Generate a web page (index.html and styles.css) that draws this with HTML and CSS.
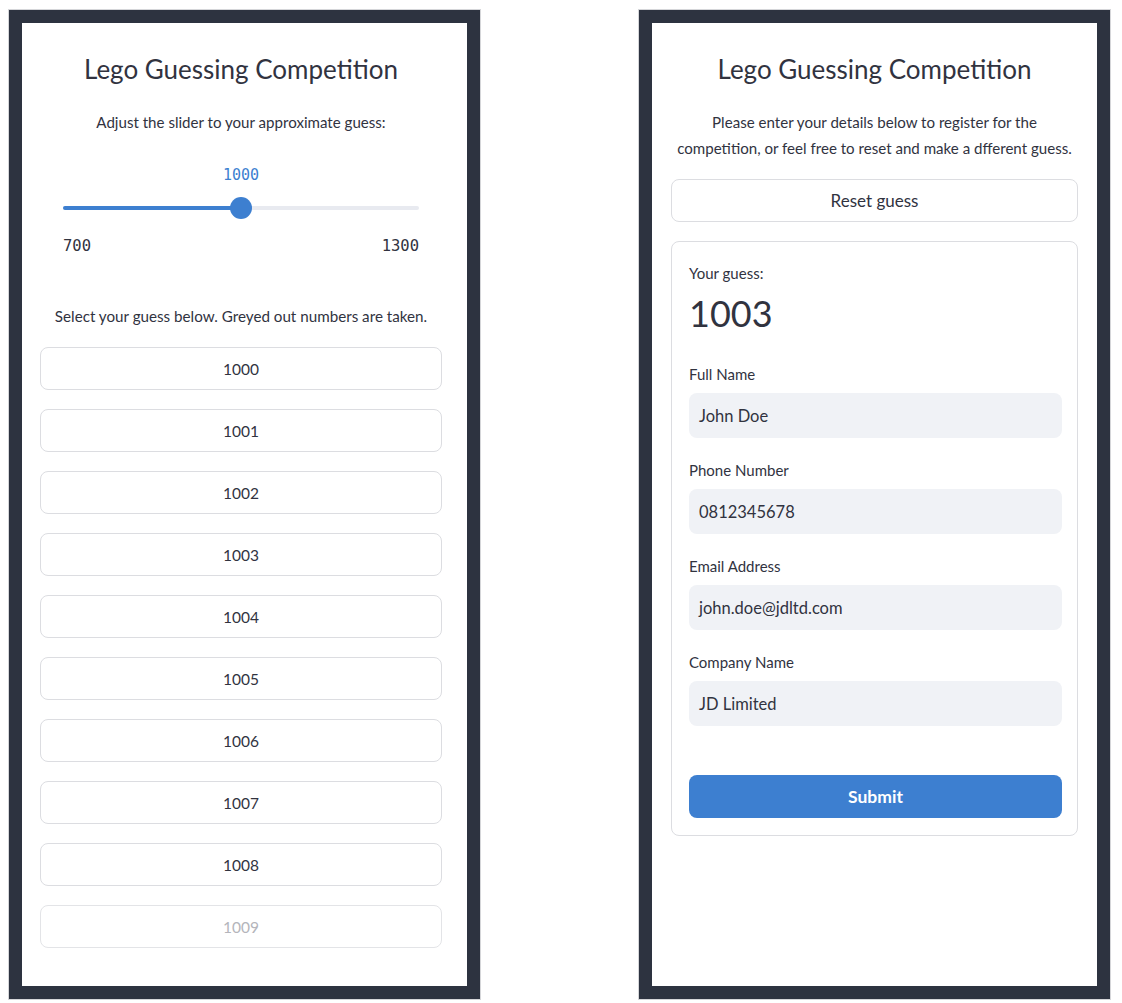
FILE: index.html
```html
<!DOCTYPE html>
<html lang="en">
<head>
<meta charset="utf-8">
<title>Lego Guessing Competition</title>
<link rel="stylesheet" href="styles.css">
</head>
<body>
<div class="stage">
  <div class="phone">
    <div class="screen screen-left">
      <h1 class="title">Lego Guessing Competition</h1>
      <p class="lead">Adjust the slider to your approximate guess:</p>
      <div class="slider">
        <div class="slider-value">1000</div>
        <div class="slider-track">
          <div class="slider-fill" style="width: 50%"></div>
          <div class="slider-thumb" style="left: 50%"></div>
        </div>
        <div class="slider-range"><span>700</span><span>1300</span></div>
      </div>
      <p class="lead lead-select">Select your guess below. Greyed out numbers are taken.</p>
      <div class="guess-list">
        <button class="btn">1000</button>
        <button class="btn">1001</button>
        <button class="btn">1002</button>
        <button class="btn">1003</button>
        <button class="btn">1004</button>
        <button class="btn">1005</button>
        <button class="btn">1006</button>
        <button class="btn">1007</button>
        <button class="btn">1008</button>
        <button class="btn btn-taken" disabled>1009</button>
      </div>
    </div>
  </div>
  <div class="phone">
    <div class="screen screen-right">
      <h1 class="title">Lego Guessing Competition</h1>
      <p class="lead lead-two">Please enter your details below to register for the<br>competition, or feel free to reset and make a dfferent guess.</p>
      <button class="btn btn-reset">Reset guess</button>
      <form class="card">
        <div class="metric-label">Your guess:</div>
        <div class="metric-value">1003</div>
        <div class="field field-first">
          <label class="field-label">Full Name</label>
          <div class="input">John Doe</div>
        </div>
        <div class="field">
          <label class="field-label">Phone Number</label>
          <div class="input">0812345678</div>
        </div>
        <div class="field">
          <label class="field-label">Email Address</label>
          <div class="input">john.doe@jdltd.com</div>
        </div>
        <div class="field">
          <label class="field-label">Company Name</label>
          <div class="input">JD Limited</div>
        </div>
        <button type="button" class="btn-primary">Submit</button>
      </form>
    </div>
  </div>
</div>
</body>
</html>
```

FILE: styles.css
```css
* { box-sizing: border-box; }
html, body { margin: 0; padding: 0; background: #ffffff; }
body {
  font-family: "Lato", "Noto Sans", sans-serif;
  color: #31333f;
}
.stage {
  display: flex;
  gap: 157px;
  padding: 9px 0 0 8px;
}
.phone {
  border: 1px solid #d5d6d9;
}
.screen {
  width: 471px;
  height: 989px;
  border: 13px solid #2d3340;
  background: #ffffff;
  display: flex;
  flex-direction: column;
  padding-top: 28px;
}
.screen-left { padding-left: 18px; padding-right: 25px; }
.screen-right { padding-left: 19px; padding-right: 19px; }

.title {
  margin: 0;
  font-size: 26px;
  line-height: 36px;
  font-weight: 400;
  text-align: center;
  color: #31333f;
}
.lead {
  margin: 23px 0 0;
  font-size: 15.1px;
  line-height: 24px;
  text-align: center;
  color: #31333f;
}
.lead-two {
  margin-top: 22px;
  line-height: 26px;
  font-size: 15.1px;
}
.lead-select { margin-top: 48px; font-size: 15.2px; }

.slider {
  margin: 31px 23px 0;
  font-family: "DejaVu Sans Mono", monospace;
}
.slider-value {
  text-align: center;
  font-size: 15px;
  line-height: 20px;
  color: #3d7fd0;
}
.slider-track {
  position: relative;
  margin-top: 12px;
  height: 22px;
}
.slider-track::before {
  content: "";
  position: absolute;
  left: 0; right: 0; top: 9px;
  height: 4px;
  border-radius: 2px;
  background: #e8eaf0;
}
.slider-fill {
  position: absolute;
  left: 0; top: 9px;
  height: 4px;
  border-radius: 2px;
  background: #3d7fd0;
}
.slider-thumb {
  position: absolute;
  top: 0;
  width: 22px; height: 22px;
  margin-left: -11px;
  border-radius: 50%;
  background: #3d7fd0;
}
.slider-range {
  margin-top: 17px;
  display: flex;
  justify-content: space-between;
  font-size: 15.5px;
  line-height: 20px;
  color: #31333f;
}

.guess-list {
  margin-top: 19px;
  display: flex;
  flex-direction: column;
  gap: 19px;
}
.btn {
  display: block;
  width: 100%;
  height: 43px;
  border: 1px solid #dcdde1;
  border-radius: 8px;
  background: #ffffff;
  font-family: "Lato", "Noto Sans", sans-serif;
  font-size: 15.5px;
  color: #31333f;
  padding: 0;
}
.btn-taken { color: #b4b5bb; border-color: #e3e4e7; }
.btn-reset { margin-top: 18px; font-size: 17px; }

.card {
  margin: 19px 0 0;
  border: 1px solid #dcdde1;
  border-radius: 8px;
  padding: 21px 15px 17px 17px;
  display: flex;
  flex-direction: column;
}
.metric-label {
  font-size: 15px;
  line-height: 20px;
}
.metric-value {
  margin-top: 8px;
  font-size: 36px;
  line-height: 44px;
}
.field { margin-top: 22px; display: flex; flex-direction: column; }
.field-first { margin-top: 29px; }
.field-label {
  font-size: 15px;
  line-height: 20px;
  margin-bottom: 9px;
}
.input {
  height: 45px;
  border-radius: 8px;
  background: #f0f2f6;
  padding: 0 10px;
  display: flex;
  align-items: center;
  font-size: 16.5px;
  color: #31333f;
}
.btn-primary {
  margin-top: 49px;
  height: 43px;
  border: none;
  border-radius: 8px;
  background: #3d7fd0;
  color: #ffffff;
  font-family: "Lato", "Noto Sans", sans-serif;
  font-size: 17.5px;
  font-weight: 700;
}
```
